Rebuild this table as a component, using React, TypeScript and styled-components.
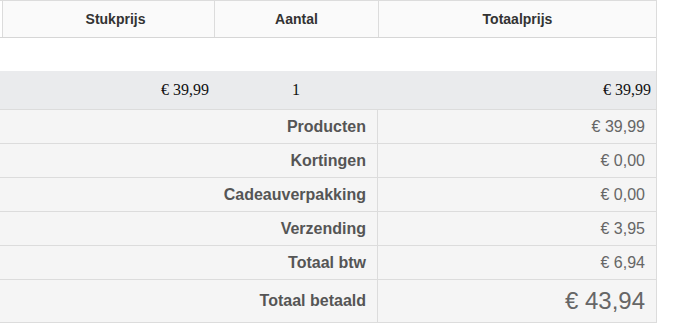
import React from "react";
import styled, { createGlobalStyle } from "styled-components";

const GlobalStyle = createGlobalStyle`
  html, body {
    margin: 0;
    padding: 0;
    background: #ffffff;
  }
`;

const totals = [
  { label: "Producten", value: "€ 39,99" },
  { label: "Kortingen", value: "€ 0,00" },
  { label: "Cadeauverpakking", value: "€ 0,00" },
  { label: "Verzending", value: "€ 3,95" },
  { label: "Totaal btw", value: "€ 6,94" },
];

const App = () => {
  return (
    <>
      <GlobalStyle />
      <Sheet>
        <HeadRow>
          <HeadCell $first>Stukprijs</HeadCell>
          <HeadCell>Aantal</HeadCell>
          <HeadCell>Totaalprijs</HeadCell>
        </HeadRow>
        <BlankRow />
        <ItemRow>
          <ItemCell $align="right">€ 39,99</ItemCell>
          <ItemCell $align="center">1</ItemCell>
          <ItemCell $align="right">€ 39,99</ItemCell>
        </ItemRow>
        {totals.map((t) => (
          <TotalRow key={t.label}>
            <TotalLabel>{t.label}</TotalLabel>
            <TotalValue>{t.value}</TotalValue>
          </TotalRow>
        ))}
        <TotalRow $big>
          <TotalLabel>Totaal betaald</TotalLabel>
          <TotalValue $big>€ 43,94</TotalValue>
        </TotalRow>
      </Sheet>
    </>
  );
};

export default App;

const Sheet = styled.div`
  width: 656px;
  border-right: 1px solid #dcdcdc;
  font-family: "Liberation Sans", Arial, sans-serif;
`;

const HeadRow = styled.div`
  display: grid;
  grid-template-columns: 212px 164px 1fr;
  height: 36px;
  padding-left: 2px;
  border-top: 1px solid #dcdcdc;
  border-bottom: 1px solid #d6d6d6;
  background: linear-gradient(to right, #ffffff 2px, #fafafa 2px);
`;

const HeadCell = styled.div<{ $first?: boolean }>`
  display: flex;
  align-items: center;
  justify-content: center;
  border-left: 1px solid #dcdcdc;
  padding-left: ${(p) => (p.$first ? "14px" : "0")};
  font-size: 14px;
  font-weight: bold;
  color: #333333;
`;

const BlankRow = styled.div`
  height: 33px;
  background: #ffffff;
`;

const ItemRow = styled.div`
  display: grid;
  grid-template-columns: 214px 164px 1fr;
  height: 38px;
  background: #eaebed;
  font-family: "Liberation Serif", "Times New Roman", serif;
  font-size: 16px;
  color: #111111;
`;

const ItemCell = styled.div<{ $align: "right" | "center" }>`
  display: flex;
  align-items: center;
  justify-content: ${(p) => (p.$align === "right" ? "flex-end" : "center")};
  padding-right: ${(p) => (p.$align === "right" ? "5px" : "0")};
`;

const TotalRow = styled.div<{ $big?: boolean }>`
  display: grid;
  grid-template-columns: 378px 1fr;
  height: ${(p) => (p.$big ? "42px" : "33px")};
  background: #f5f5f5;
  border-top: 1px solid #dcdcdc;
  &:last-child {
    border-bottom: 1px solid #dcdcdc;
  }
`;

const TotalLabel = styled.div`
  display: flex;
  align-items: center;
  justify-content: flex-end;
  padding-right: 11px;
  border-right: 1px solid #dcdcdc;
  font-size: 16px;
  font-weight: bold;
  color: #555555;
`;

const TotalValue = styled.div<{ $big?: boolean }>`
  display: flex;
  align-items: center;
  justify-content: flex-end;
  padding-right: 11px;
  font-size: ${(p) => (p.$big ? "24px" : "16px")};
  color: #666666;
`;
